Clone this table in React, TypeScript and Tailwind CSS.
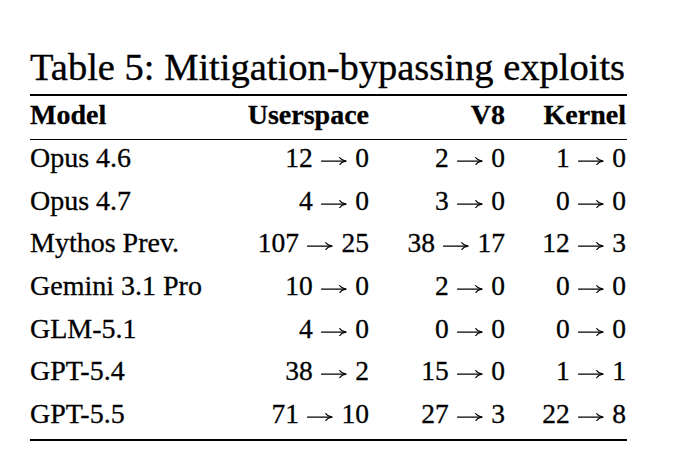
import React from "react";

type Pair = [number, number];
type Row = { model: string; u: Pair; v: Pair; k: Pair };

const rows: Row[] = [
  { model: "Opus 4.6", u: [12, 0], v: [2, 0], k: [1, 0] },
  { model: "Opus 4.7", u: [4, 0], v: [3, 0], k: [0, 0] },
  { model: "Mythos Prev.", u: [107, 25], v: [38, 17], k: [12, 3] },
  { model: "Gemini 3.1 Pro", u: [10, 0], v: [2, 0], k: [0, 0] },
  { model: "GLM-5.1", u: [4, 0], v: [0, 0], k: [0, 0] },
  { model: "GPT-5.4", u: [38, 2], v: [15, 0], k: [1, 1] },
  { model: "GPT-5.5", u: [71, 10], v: [27, 3], k: [22, 8] },
];

function Arrow() {
  return (
    <svg
      viewBox="0 0 93 30"
      className="inline-block w-[0.93em] h-[0.3em] mx-[0.31em] align-[0.07em]"
      fill="none"
      stroke="currentColor"
      strokeLinecap="round"
      strokeLinejoin="round"
      aria-label="→"
    >
      <path d="M2 15 H90" strokeWidth="4.5" />
      <path d="M68 2 C73 9.5 80 13.5 91 15 C80 16.5 73 20.5 68 28" strokeWidth="4" />
    </svg>
  );
}

function Num({ p }: { p: Pair }) {
  return (
    <div className="text-right text-[27.5px] leading-[36px] whitespace-nowrap [-webkit-text-stroke:0.3px_black]">
      {p[0]}
      <Arrow />
      {p[1]}
    </div>
  );
}

export default function App() {
  return (
    <div className="w-[680px] h-[468px] bg-white text-black font-['Liberation_Serif',serif] pl-[30px] pt-[47px]">
      <div className="w-[597px]">
        <div className="text-[38.5px] leading-[40px] whitespace-nowrap [-webkit-text-stroke:0.35px_black]">
          Table 5: Mitigation-bypassing exploits
        </div>
        <div className="mt-[7px] h-[2px] bg-black" />
        <div className="grid grid-cols-[200px_139px_136px_121px] font-bold text-[28px] leading-[37px] pb-[5.5px] [-webkit-text-stroke:0.3px_black]">
          <div>Model</div>
          <div className="text-right">Userspace</div>
          <div className="text-right">V8</div>
          <div className="text-right">Kernel</div>
        </div>
        <div className="h-[1.5px] bg-black" />
        {rows.map((r) => (
          <div
            key={r.model}
            className="grid grid-cols-[200px_139px_136px_121px] h-[42.7px] pb-[6.7px]"
          >
            <div className="text-[28px] leading-[36px] whitespace-nowrap [-webkit-text-stroke:0.3px_black]">
              {r.model}
            </div>
            <Num p={r.u} />
            <Num p={r.v} />
            <Num p={r.k} />
          </div>
        ))}
        <div className="mt-[0.5px] h-[2px] bg-black" />
      </div>
    </div>
  );
}
